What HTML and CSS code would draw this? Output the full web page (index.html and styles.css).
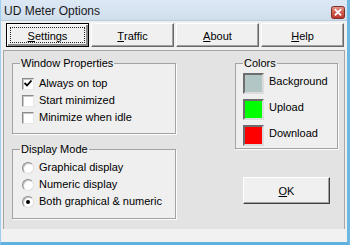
FILE: index.html
```html
<!DOCTYPE html>
<html>
<head>
<meta charset="utf-8">
<link rel="stylesheet" href="styles.css">
</head>
<body>
<div class="window">
  <div class="titlebar">
    <span class="title">UD Meter Options</span>
    <div class="close">
      <svg width="14" height="13" viewBox="0 0 14 13">
        <defs>
          <linearGradient id="cg" x1="0" y1="0" x2="0" y2="1">
            <stop offset="0" stop-color="#e59a8e"/>
            <stop offset="0.5" stop-color="#cf5b4d"/>
            <stop offset="1" stop-color="#b8352a"/>
          </linearGradient>
        </defs>
        <rect x="0.5" y="0.5" width="13" height="12" rx="2" fill="url(#cg)" stroke="#7d2d26"/>
        <path d="M4.5 3.8 L9.5 8.8 M9.5 3.8 L4.5 8.8" stroke="#fff" stroke-width="1.8" stroke-linecap="square"/>
      </svg>
    </div>
  </div>
  <div class="client">
    <div class="tabs">
      <div class="btn default"><span class="focus"><u>S</u>ettings</span></div>
      <div class="btn"><u>T</u>raffic</div>
      <div class="btn"><u>A</u>bout</div>
      <div class="btn"><u>H</u>elp</div>
    </div>
    <div class="panel">
      <div class="left-col">
        <fieldset class="group g1">
          <legend>Window Properties</legend>
          <div class="rows">
            <div class="row"><span class="check on"><svg width="8" height="7" viewBox="0 0 8 7"><path d="M0.5 3 L3 5.5 L7.5 0.5" fill="none" stroke="#000" stroke-width="1.8"/></svg></span><span>Always on top</span></div>
            <div class="row"><span class="check"></span><span>Start minimized</span></div>
            <div class="row"><span class="check"></span><span>Minimize when idle</span></div>
          </div>
        </fieldset>
        <fieldset class="group g2">
          <legend>Display Mode</legend>
          <div class="rows radios">
            <div class="row"><span class="radio"></span><span>Graphical display</span></div>
            <div class="row"><span class="radio"></span><span>Numeric display</span></div>
            <div class="row"><span class="radio on"><i></i></span><span>Both graphical &amp; numeric</span></div>
          </div>
        </fieldset>
      </div>
      <div class="right-col">
        <fieldset class="group colors">
          <legend>Colors</legend>
          <div class="swatches">
            <div class="swrow"><span class="swatch bg"></span><span class="swlabel">Background</span></div>
            <div class="swrow"><span class="swatch up"></span><span class="swlabel">Upload</span></div>
            <div class="swrow"><span class="swatch down"></span><span class="swlabel">Download</span></div>
          </div>
        </fieldset>
        <div class="btn ok"><u>O</u>K</div>
      </div>
    </div>
    <div class="footer"></div>
  </div>
</div>
</body>
</html>
```

FILE: styles.css
```css
* { box-sizing: border-box; }
html, body {
  margin: 0;
  padding: 0;
  width: 350px;
  height: 245px;
  overflow: hidden;
  background: #f0f0f0;
}
body {
  font-family: "Liberation Sans", Arial, sans-serif;
  font-size: 11px;
  color: #000;
}
.window {
  width: 350px;
  height: 245px;
  display: flex;
  flex-direction: column;
  border-left: 1px solid #9fcfec;
  border-right: 3px solid #6cb8e2;
  border-bottom: 3px solid #5fb2e0;
  background: #f0f0f0;
}
.titlebar {
  height: 21px;
  flex: none;
  display: flex;
  align-items: center;
  justify-content: space-between;
  padding: 0 2px 0 3px;
  background: linear-gradient(#dce8f4, #d0deec);
  border-bottom: 1px solid #bccbdb;
}
.title {
  font-size: 12px;
  color: #1a1a1a;
  padding-top: 2px;
}
.close {
  display: flex;
  margin-top: 4px;
}
.client {
  flex: 1;
  display: flex;
  flex-direction: column;
  padding: 0 2px;
}
.tabs {
  margin: 2px 0 0 3px;
  width: 338px;
  height: 24px;
  display: grid;
  grid-template-columns: repeat(4, 1fr);
  gap: 2px;
}
.btn {
  display: flex;
  align-items: center;
  justify-content: center;
  background: #f0f0f0;
  border: 1px solid;
  border-color: #ffffff #696969 #696969 #ffffff;
  box-shadow: inset -1px -1px 0 #a0a0a0;
  padding-top: 1px;
}
.btn.default {
  border: 1px solid #000;
  box-shadow: inset 1px 1px 0 #fff, inset -2px -2px 0 #8a8a8a;
  padding: 3px;
}
.btn.default .focus {
  flex: 1;
  align-self: stretch;
  display: flex;
  align-items: center;
  justify-content: center;
  outline: 1px dotted #222;
  outline-offset: -1px;
  padding-top: 1px;
}
.panel {
  margin-top: 3px;
  height: 179px;
  flex: none;
  display: flex;
  gap: 59px;
  padding: 6px 0 0 8px;
  background: #e3e3e3;
  border: 1px solid #a6a6a6;
  border-bottom: none;
}
.left-col {
  width: 164px;
  display: flex;
  flex-direction: column;
  gap: 9px;
}
.right-col {
  width: 103px;
  display: flex;
  flex-direction: column;
}
.group {
  margin: 0;
  padding: 0;
  min-width: 0;
  background: #efefef;
  border: 1px solid #a3a3a3;
  box-shadow: 1px 1px 0 #fbfbfb;
}
.group legend {
  margin-left: 7px;
  padding: 0 1px;
  line-height: 13px;
  font-size: 11px;
}
.g1 { height: 77px; }
.g2 { height: 76px; }
.colors { height: 92px; }
.rows {
  margin-top: 5px;
  padding-left: 9px;
  display: flex;
  flex-direction: column;
}
.radios { margin-top: 3px; }
.row {
  height: 17px;
  display: flex;
  align-items: center;
  gap: 5px;
  line-height: 13px;
}
.check {
  width: 12px;
  height: 12px;
  flex: none;
  display: flex;
  align-items: center;
  justify-content: center;
  background: #fff;
  border: 1px solid;
  border-color: #8a8a8a #e8e8e8 #e8e8e8 #8a8a8a;
  box-shadow: inset 1px 1px 0 #c8c8c8;
}
.radio {
  width: 12px;
  height: 12px;
  flex: none;
  border-radius: 50%;
  display: flex;
  align-items: center;
  justify-content: center;
  background: #fff;
  border: 1px solid;
  border-color: #8a8a8a #e0e0e0 #e0e0e0 #8a8a8a;
  box-shadow: inset 1px 1px 0 #c8c8c8;
}
.radio i {
  width: 4px;
  height: 4px;
  border-radius: 50%;
  background: #000;
}
.swatches {
  margin-top: 3px;
  padding-left: 7px;
  display: flex;
  flex-direction: column;
  gap: 5px;
}
.swrow {
  display: flex;
  align-items: flex-start;
  gap: 5px;
  height: 21px;
}
.swatch {
  width: 21px;
  height: 21px;
  flex: none;
  border: 2px solid;
  border-color: #6e6e6e #dcdcdc #dcdcdc #6e6e6e;
}
.swatch.bg { background: #b3c6c6; }
.swatch.up { background: #00ff00; }
.swatch.down { background: #ff0000; }
.swlabel {
  line-height: 13px;
  padding-top: 2px;
}
.btn.ok {
  margin: 28px 0 0 8px;
  width: 87px;
  height: 27px;
  flex: none;
  border-color: #ffffff #404040 #404040 #ffffff;
  box-shadow: inset -1px -1px 0 #a0a0a0;
}
.footer {
  flex: 1;
  background: #f1f1f1;
}
```
